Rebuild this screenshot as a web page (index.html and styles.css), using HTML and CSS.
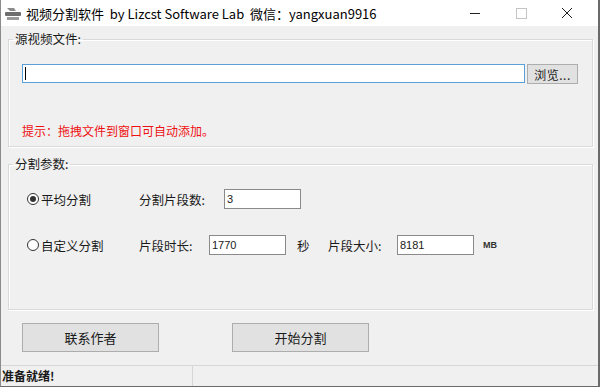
FILE: index.html
```html
<!DOCTYPE html>
<html lang="zh-CN">
<head>
    <meta charset="UTF-8">
    <title>视频分割软件</title>
    <link rel="stylesheet" href="styles.css">
</head>
<body>
    <div class="window">
        <header class="titlebar">
            <svg class="app-icon" width="18" height="14" viewBox="0 0 18 14">
                <path d="M3 1h7l2 3H6z" fill="#8a8a8a"/>
                <rect x="1" y="5" width="16" height="4" rx="1" fill="#6e6e6e"/>
                <rect x="3" y="10" width="12" height="3" fill="#9a9a9a"/>
            </svg>
            <span class="title">视频分割软件&nbsp;&nbsp;by Lizcst Software Lab&nbsp;&nbsp;微信：yangxuan9916</span>
            <div class="controls">
                <svg width="46" height="26" viewBox="0 0 46 26"><path d="M18 13.5h10" stroke="#222" stroke-width="1"/></svg>
                <svg width="46" height="26" viewBox="0 0 46 26"><rect x="18.5" y="8.5" width="10" height="10" fill="none" stroke="#c4c4c4"/></svg>
                <svg width="46" height="26" viewBox="0 0 46 26"><path d="M18 8l10 10M28 8L18 18" stroke="#222" stroke-width="1"/></svg>
            </div>
        </header>

        <main class="content">
            <fieldset class="group source">
                <legend>源视频文件:</legend>
                <div class="file-row">
                    <div class="path-input focused"><span class="caret"></span></div>
                    <button class="browse">浏览...</button>
                </div>
                <p class="tip">提示：拖拽文件到窗口可自动添加。</p>
            </fieldset>

            <fieldset class="group params">
                <legend>分割参数:</legend>
                <div class="param-row">
                    <label class="radio-label"><span class="radio checked"></span>平均分割</label>
                    <span class="field-label w-count">分割片段数:</span>
                    <div class="num-input">3</div>
                </div>
                <div class="param-row second">
                    <label class="radio-label"><span class="radio"></span>自定义分割</label>
                    <span class="field-label w-time">片段时长:</span>
                    <div class="num-input">1770</div>
                    <span class="unit sec">秒</span>
                    <span class="field-label w-size">片段大小:</span>
                    <div class="num-input">8181</div>
                    <span class="unit mb">MB</span>
                </div>
            </fieldset>

            <div class="actions">
                <button class="action">联系作者</button>
                <button class="action">开始分割</button>
            </div>
        </main>

        <footer class="statusbar">
            <span class="status-text">准备就绪!</span>
            <span class="status-rest"></span>
        </footer>
    </div>
</body>
</html>
```

FILE: styles.css
```css
* {
    margin: 0;
    padding: 0;
    box-sizing: border-box;
}

body {
    background-color: #f0f0f0;
    font-family: "Noto Sans CJK SC", "Noto Sans", sans-serif;
    font-size: 12px;
    color: #1a1a1a;
}

.window {
    width: 600px;
    height: 387px;
    display: flex;
    flex-direction: column;
    background-color: #f0f0f0;
    border-left: 1px solid #8c8c8c;
    border-right: 2px solid #6a6a6a;
    border-bottom: 1px solid #6a6a6a;
    overflow: hidden;
}

.titlebar {
    height: 26px;
    background-color: #ffffff;
    display: flex;
    align-items: center;
    padding-left: 3px;
}

    .titlebar .app-icon {
        margin-right: 4px;
        margin-top: 1px;
    }

    .titlebar .title {
        font-size: 13px;
        color: #000000;
        flex: 1;
        white-space: nowrap;
    }

    .titlebar .controls {
        display: flex;
        margin-right: 8px;
    }

.content {
    flex: 1;
    padding: 5px 0 0 7px;
    display: flex;
    flex-direction: column;
}

.group {
    width: 585px;
    border: 1px solid #d9d9d9;
    box-shadow: inset 1px 1px 0 #ffffff, 1px 1px 0 #ffffff;
    padding: 0 13px;
}

    .group legend {
        font-size: 12.5px;
        line-height: 16px;
        padding: 0 2px;
        margin-left: -9px;
        color: #1a1a1a;
    }

.source {
    padding-bottom: 7px;
}

.file-row {
    display: flex;
    align-items: flex-start;
    margin-top: 17px;
}

.path-input {
    width: 503px;
    height: 19px;
    background-color: #ffffff;
    border: 1px solid #5b9fd8;
    display: flex;
    align-items: center;
    padding-left: 2px;
}

    .path-input .caret {
        width: 1px;
        height: 13px;
        background-color: #000000;
    }

.browse {
    width: 51px;
    height: 20px;
    margin-left: 2px;
    background-color: #e1e1e1;
    border: 1px solid #adadad;
    font-family: inherit;
    font-size: 12px;
    color: #1a1a1a;
    letter-spacing: 0.5px;
}

.tip {
    margin-top: 39px;
    line-height: 16px;
    color: #ee1111;
    font-size: 12px;
}

.params {
    margin-top: 9px;
    padding-left: 18px;
    padding-bottom: 54px;
}

    .params legend {
        margin-left: -14px;
    }

.param-row {
    display: flex;
    align-items: center;
    height: 20px;
    margin-top: 17px;
}

    .param-row.second {
        margin-top: 26px;
    }

.radio-label {
    width: 112px;
    display: flex;
    align-items: center;
    font-size: 12.5px;
}

.radio {
    width: 12px;
    height: 12px;
    border: 1px solid #333333;
    border-radius: 50%;
    background-color: #ffffff;
    margin-right: 2px;
    display: flex;
    align-items: center;
    justify-content: center;
}

    .radio.checked::after {
        content: "";
        width: 6px;
        height: 6px;
        border-radius: 50%;
        background-color: #333333;
    }

.field-label {
    font-size: 12.5px;
}

.w-count {
    width: 85px;
}

.w-time {
    width: 70px;
}

.w-size {
    width: 69px;
}

.num-input {
    width: 77px;
    height: 20px;
    background-color: #ffffff;
    border: 1px solid #8a8a8a;
    font-family: "Liberation Sans", sans-serif;
    font-size: 11px;
    line-height: 18px;
    padding-left: 2px;
}

.unit.sec {
    margin-left: 11px;
    width: 31px;
    font-size: 12.5px;
}

.unit.mb {
    margin-left: 9px;
    font-family: "Liberation Sans", sans-serif;
    font-size: 9px;
    font-weight: bold;
    color: #333333;
}

.actions {
    display: flex;
    gap: 73px;
    margin-top: 13px;
    padding-left: 14px;
}

.action {
    width: 137px;
    height: 29px;
    background-color: #e1e1e1;
    border: 1px solid #adadad;
    font-family: inherit;
    font-size: 13px;
    color: #1a1a1a;
}

.statusbar {
    height: 21px;
    display: flex;
    border-top: 1px solid #d7d7d7;
}

.status-text {
    width: 192px;
    padding-left: 1px;
    font-weight: bold;
    font-size: 12px;
    line-height: 20px;
    border-right: 1px solid #d7d7d7;
}

.status-rest {
    flex: 1;
}
```
